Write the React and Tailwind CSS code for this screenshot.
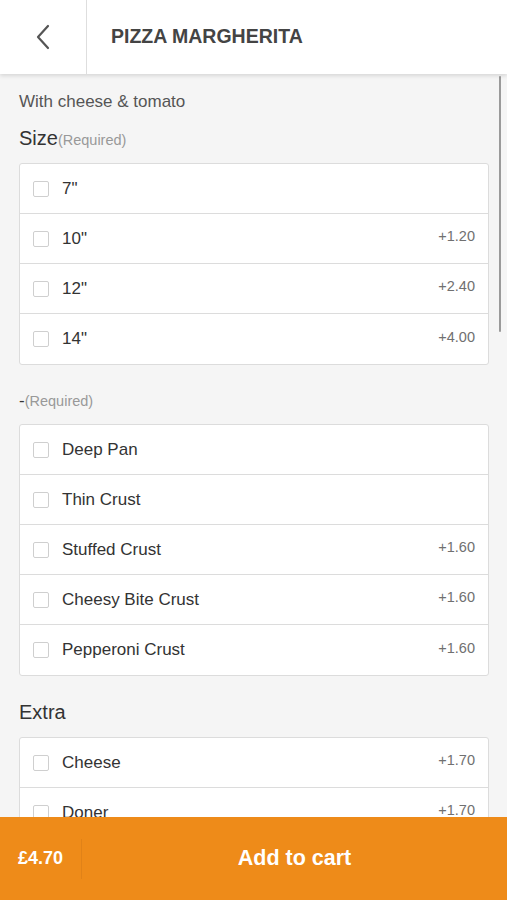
import React from 'react';

const sections = [
  {
    title: 'Size',
    required: true,
    options: [
      { name: '7"' },
      { name: '10"', price: '+1.20' },
      { name: '12"', price: '+2.40' },
      { name: '14"', price: '+4.00' },
    ],
  },
  {
    title: '-',
    required: true,
    small: true,
    options: [
      { name: 'Deep Pan' },
      { name: 'Thin Crust' },
      { name: 'Stuffed Crust', price: '+1.60' },
      { name: 'Cheesy Bite Crust', price: '+1.60' },
      { name: 'Pepperoni Crust', price: '+1.60' },
    ],
  },
  {
    title: 'Extra',
    options: [
      { name: 'Cheese', price: '+1.70' },
      { name: 'Doner', price: '+1.70' },
      { name: 'Chicken', price: '+1.70' },
    ],
  },
];

const OptionRow = ({ option, last }) => (
  <label
    className={`flex items-center h-[50px] pl-[13px] pr-[13px] ${
      last ? '' : 'border-b border-[#dcdcdc]'
    }`}
  >
    <span className="w-[16px] h-[16px] border border-[#cfcfcf] rounded-[2px] bg-white shrink-0" />
    <span className="ml-[13px] text-[17px] text-[#333] flex-1">{option.name}</span>
    {option.price && (
      <span className="text-[14.5px] text-[#707070] -mt-[3px]">{option.price}</span>
    )}
  </label>
);

const Section = ({ section }) => (
  <div className="mb-[24px]">
    <div className="flex items-baseline h-[24px] leading-[24px]">
      <span className={`${section.small ? 'text-[17px]' : 'text-[20px]'} text-[#333]`}>
        {section.title}
      </span>
      {section.required && (
        <span className="text-[14.5px] text-[#999]">(Required)</span>
      )}
    </div>
    <div
      className={`${section.small ? 'mt-[11px]' : 'mt-[13px]'} bg-white border border-[#dcdcdc] rounded-[3px]`}
    >
      {section.options.map((o, i) => (
        <OptionRow key={o.name} option={o} last={i === section.options.length - 1} />
      ))}
    </div>
  </div>
);

export default function App() {
  return (
    <div
      className="relative w-[507px] h-[900px] flex flex-col bg-[#f5f5f5] overflow-hidden"
      style={{ fontFamily: '"Liberation Sans", Arial, sans-serif' }}
    >
      <header className="relative z-10 h-[74px] shrink-0 flex bg-white shadow-[0_2px_4px_rgba(0,0,0,0.12)]">
        <div className="w-[87px] flex items-center justify-center border-r border-[#dedede]">
          <svg width="16" height="26" viewBox="0 0 16 26" className="-ml-[1px]">
            <path d="M13 2 L3 13 L13 24" fill="none" stroke="#555" strokeWidth="2.2" strokeLinecap="round" strokeLinejoin="round" />
          </svg>
        </div>
        <h1 className="flex items-center pl-[24px] text-[19.5px] font-bold text-[#444]">
          PIZZA MARGHERITA
        </h1>
      </header>

      <main className="flex-1 overflow-hidden px-[19px] pr-[18px] pt-[19px]">
        <p className="text-[17px] text-[#555] leading-[18px] mb-[15px]">With cheese &amp; tomato</p>
        {sections.map(s => (
          <Section key={s.title} section={s} />
        ))}
      </main>

      <div className="absolute right-[6px] top-[76px] w-[2px] h-[256px] bg-[#9a9a9a] rounded-full" />

      <footer className="h-[83px] shrink-0 flex items-center bg-[#ee8b19] text-white font-bold">
        <div className="w-[82px] h-[40px] flex items-center pl-[18px] border-r border-[#e08218] text-[18px]">
          £4.70
        </div>
        <div className="flex-1 text-center text-[21.5px]">Add to cart</div>
      </footer>
    </div>
  );
}
